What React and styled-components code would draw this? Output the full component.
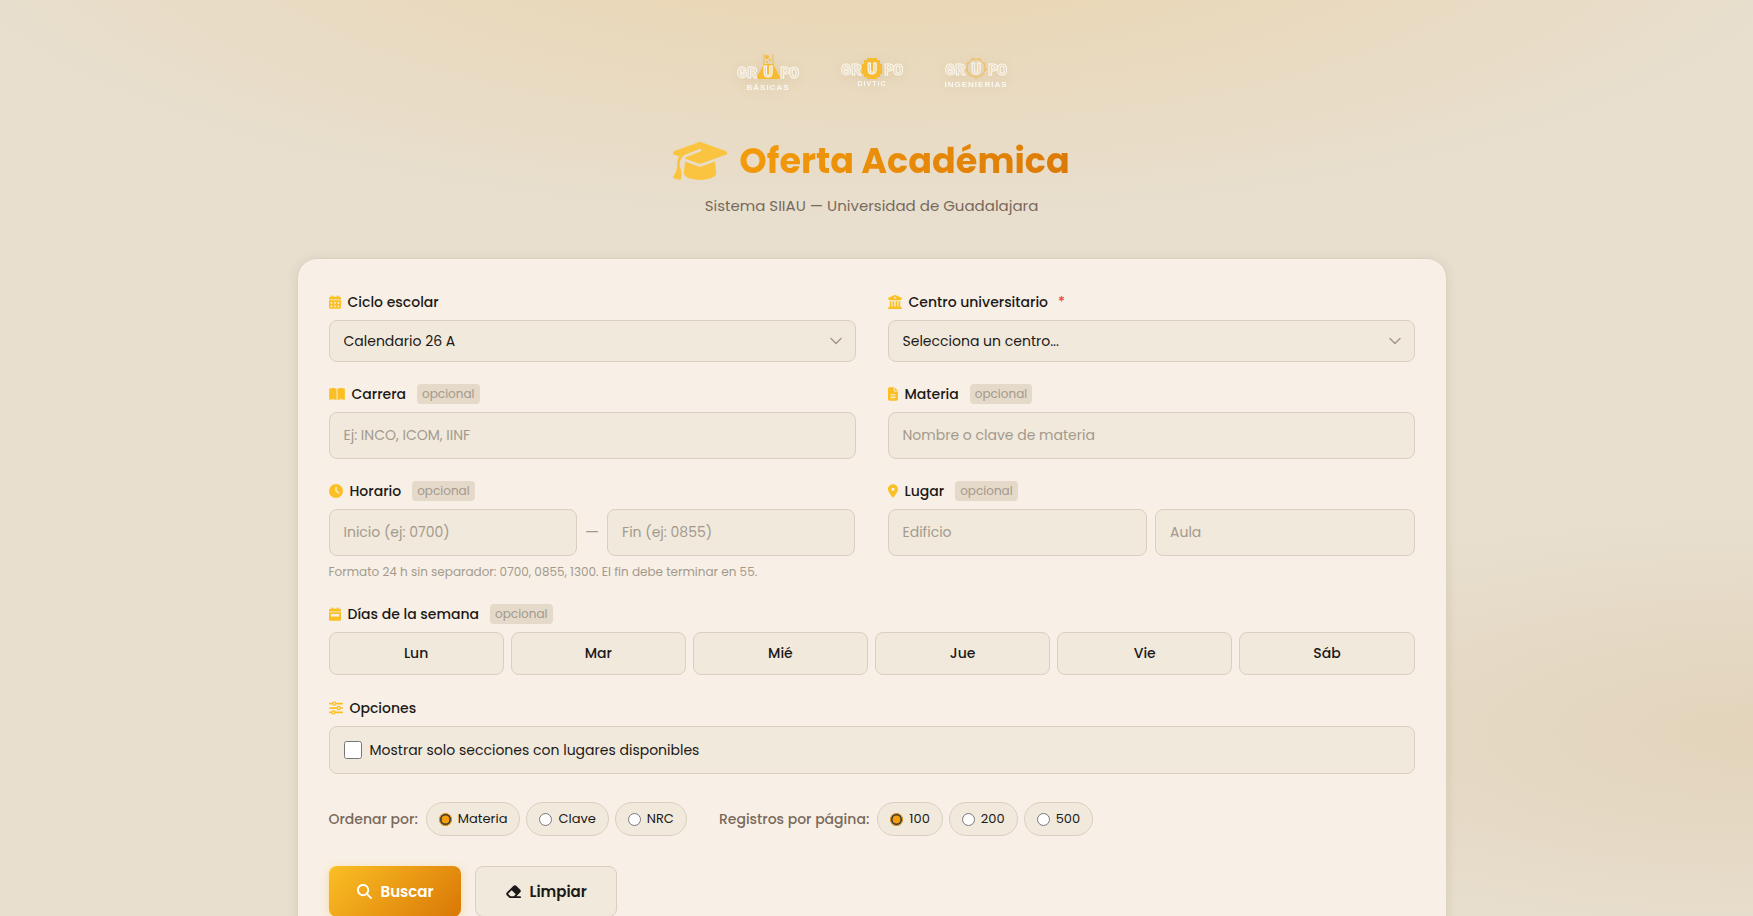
import React, { useState } from "react";
import styled, { createGlobalStyle, css } from "styled-components";
import {
  FaBookOpen,
  FaBuildingColumns,
  FaCalendarDays,
  FaCalendarWeek,
  FaClock,
  FaEraser,
  FaFileLines,
  FaGraduationCap,
  FaLocationDot,
  FaMagnifyingGlass,
  FaSliders,
} from "react-icons/fa6";

const DAYS = ["Lun", "Mar", "Mié", "Jue", "Vie", "Sáb"];
const ORDERS = ["Materia", "Clave", "NRC"];
const PAGE_SIZES = ["100", "200", "500"];

const Wordmark = ({ caption, baseline = 27, captionY = 39, small, children }) => (
  <Logo viewBox="0 0 64 48" role="img" aria-label={`Grupo ${caption}`}>
    <LogoLetter x="6" y={baseline}>G</LogoLetter>
    <LogoLetter x="16" y={baseline}>R</LogoLetter>
    {children}
    <LogoLetter x="32" y={baseline - 1}>U</LogoLetter>
    <LogoLetter x="49" y={baseline}>P</LogoLetter>
    <LogoLetter x="58" y={baseline}>O</LogoLetter>
    <LogoCaption x="32" y={captionY} $small={small}>
      {caption}
    </LogoCaption>
  </Logo>
);

const App = () => {
  const [days, setDays] = useState([]);
  const [order, setOrder] = useState("Materia");
  const [pageSize, setPageSize] = useState("100");

  const toggleDay = (day) =>
    setDays(days.includes(day) ? days.filter((d) => d !== day) : [...days, day]);

  return (
    <>
      <GlobalStyle />
      <Page>
        <Header>
          <Logos>
            <Wordmark caption="BÁSICAS" baseline={30} captionY={42}>
              <path d="M28 6v11M37 6v11" stroke="#f3b536" />
              <path d="M28 16h9l7 13q0 2-1 2H22q-1 0-1-2z" fill="#fbb40f" />
              <circle cx="31" cy="9" r="2" fill="#fbb40f" />
              <circle cx="34" cy="12" r="1" fill="#fbb40f" />
              <circle cx="31" cy="14" r="1" fill="#fbb40f" />
            </Wordmark>
            <Wordmark caption="DIVTIC" captionY={38} small>
              <path d="M27 10h10v2h3v4h2v10h-2v3h-3v2H27v-2h-3v-3h-2V16h2v-4h3z" fill="#fbb40f" />
            </Wordmark>
            <Wordmark caption="INGENIERIAS">
              <circle cx="32" cy="20" r="9" fill="none" stroke="#f2b640" />
              <circle cx="32" cy="20" r="10" fill="none" stroke="#f2b640" strokeDasharray="3 4" />
            </Wordmark>
          </Logos>
          <Title>
            <TitleIcon />
            <TitleText>Oferta Académica</TitleText>
          </Title>
          <Subtitle>Sistema SIIAU — Universidad de Guadalajara</Subtitle>
        </Header>

        <Card onSubmit={(e) => e.preventDefault()}>
          <Columns>
            <Field>
              <Label htmlFor="ciclo" $icon={12}>
                <FaCalendarDays />
                Ciclo escolar
              </Label>
              <SelectWrap>
                <Select id="ciclo">
                  <option>Calendario 26 A</option>
                </Select>
                <Chevron />
              </SelectWrap>
            </Field>
            <Field>
              <Label htmlFor="centro">
                <FaBuildingColumns />
                Centro universitario
                <Required>*</Required>
              </Label>
              <SelectWrap>
                <Select id="centro">
                  <option>Selecciona un centro...</option>
                </Select>
                <Chevron />
              </SelectWrap>
            </Field>

            <Field>
              <Label htmlFor="carrera" $icon={16}>
                <FaBookOpen />
                Carrera
                <Badge>opcional</Badge>
              </Label>
              <Input id="carrera" placeholder="Ej: INCO, ICOM, IINF" />
            </Field>
            <Field>
              <Label htmlFor="materia" $icon={10}>
                <FaFileLines />
                Materia
                <Badge>opcional</Badge>
              </Label>
              <Input id="materia" placeholder="Nombre o clave de materia" />
            </Field>

            <Field>
              <Label htmlFor="inicio">
                <FaClock />
                Horario
                <Badge>opcional</Badge>
              </Label>
              <Inline>
                <Input id="inicio" placeholder="Inicio (ej: 0700)" />
                <Dash>—</Dash>
                <Input aria-label="Fin" placeholder="Fin (ej: 0855)" />
              </Inline>
              <Hint>Formato 24 h sin separador: 0700, 0855, 1300. El fin debe terminar en 55.</Hint>
            </Field>
            <Field>
              <Label htmlFor="edificio" $icon={10}>
                <FaLocationDot />
                Lugar
                <Badge>opcional</Badge>
              </Label>
              <Inline>
                <Input id="edificio" placeholder="Edificio" />
                <Input aria-label="Aula" placeholder="Aula" />
              </Inline>
            </Field>
          </Columns>

          <Field role="group" aria-labelledby="dias">
            <Label as="div" id="dias" $icon={12}>
              <FaCalendarWeek />
              Días de la semana
              <Badge>opcional</Badge>
            </Label>
            <Days>
              {DAYS.map((day) => (
                <Day
                  key={day}
                  type="button"
                  aria-pressed={days.includes(day)}
                  $active={days.includes(day)}
                  onClick={() => toggleDay(day)}
                >
                  {day}
                </Day>
              ))}
            </Days>
          </Field>

          <Field role="group" aria-labelledby="opciones">
            <Label as="div" id="opciones">
              <FaSliders />
              Opciones
            </Label>
            <CheckRow>
              <Checkbox type="checkbox" />
              Mostrar solo secciones con lugares disponibles
            </CheckRow>
          </Field>

          <Filters>
            <Group role="radiogroup" aria-labelledby="ordenar">
              <GroupName id="ordenar">Ordenar por:</GroupName>
              <Pills>
                {ORDERS.map((item) => (
                  <Pill key={item}>
                    <Radio
                      type="radio"
                      name="orden"
                      checked={order === item}
                      onChange={() => setOrder(item)}
                    />
                    {item}
                  </Pill>
                ))}
              </Pills>
            </Group>
            <Group role="radiogroup" aria-labelledby="registros">
              <GroupName id="registros">Registros por página:</GroupName>
              <Pills>
                {PAGE_SIZES.map((item) => (
                  <Pill key={item}>
                    <Radio
                      type="radio"
                      name="registros"
                      checked={pageSize === item}
                      onChange={() => setPageSize(item)}
                    />
                    {item}
                  </Pill>
                ))}
              </Pills>
            </Group>
          </Filters>

          <Actions>
            <Button type="submit" $primary>
              <FaMagnifyingGlass />
              Buscar
            </Button>
            <Button type="reset">
              <FaEraser />
              Limpiar
            </Button>
          </Actions>
        </Card>
      </Page>
    </>
  );
};

const Chevron = () => (
  <ChevronIcon viewBox="0 0 12 8" aria-hidden="true">
    <path
      d="M1 1.5l5 5 5-5"
      fill="none"
      stroke="currentColor"
      strokeWidth="1.5"
      strokeLinecap="round"
      strokeLinejoin="round"
    />
  </ChevronIcon>
);

const GlobalStyle = createGlobalStyle`
  * {
    box-sizing: border-box;
  }
  body {
    margin: 0;
    padding-right: 10px;
    min-height: 100vh;
    color: #1c1917;
    font-family: Poppins, Inter, sans-serif;
    font-size: 14px;
    background:
      radial-gradient(ellipse 80% 50% at 50% -10%, rgba(245, 158, 11, 0.18), transparent 70%),
      radial-gradient(ellipse 60% 40% at 100% 80%, rgba(190, 130, 40, 0.12), transparent 60%),
      #e8dfcf;
    background-attachment: fixed;
  }
  input, select, button {
    font-family: inherit;
    color: inherit;
  }
`;

const surface = css`
  border: 1px solid #d9d0bf;
  border-radius: 8px;
  background: #f1e9dc;
`;

const Page = styled.main`
  max-width: 1198px;
  margin: 0 auto;
  padding: 48px 24px;
`;

const Header = styled.header`
  display: flex;
  flex-direction: column;
  align-items: center;
  margin-bottom: 39px;
`;

const Logos = styled.div`
  display: flex;
  gap: 40px;
  margin-bottom: 37px;
`;

const Logo = styled.svg`
  width: 64px;
  height: 48px;
  overflow: visible;
  opacity: 0.8;
  filter: drop-shadow(0 2px 6px rgba(160, 120, 50, 0.2));
`;

const LogoLetter = styled.text`
  font-family: "Liberation Mono", monospace;
  font-size: 17px;
  font-weight: 700;
  text-anchor: middle;
  fill: #e8d5b0;
  stroke: #fff;
  stroke-width: 1px;
`;

const LogoCaption = styled.text`
  font-family: "Liberation Sans", sans-serif;
  font-size: ${({ $small }) => ($small ? "7px" : "8px")};
  font-weight: 700;
  letter-spacing: 1px;
  text-anchor: middle;
  fill: #fff;
`;

const Title = styled.h1`
  display: flex;
  align-items: center;
  gap: 12px;
  margin: 0;
  font-size: 35px;
  line-height: 56px;
  font-weight: 700;
`;

const TitleIcon = styled(FaGraduationCap)`
  width: 54px;
  height: 44px;
  color: #fbc440;
`;

const TitleText = styled.span`
  background: linear-gradient(135deg, #f59e0b, #d97706);
  background-clip: text;
  color: transparent;
`;

const Subtitle = styled.p`
  margin: 4px 0 0;
  color: #78695c;
  font-size: 15px;
  line-height: 26px;
`;

const Card = styled.form`
  display: flex;
  flex-direction: column;
  gap: 22px;
  padding: 32px 31px;
  border: 1px solid #ddd2bf;
  border-radius: 20px;
  background: #f8f0e6;
  box-shadow: 0 2px 12px rgba(90, 70, 30, 0.12);
`;

const Columns = styled.div`
  display: grid;
  grid-template-columns: 1fr 1fr;
  gap: 21px 32px;
  @media (max-width: 768px) {
    grid-template-columns: 1fr;
  }
`;

const Field = styled.div`
  display: flex;
  flex-direction: column;
  gap: 7px;
  min-width: 0;
`;

const Label = styled.label`
  display: flex;
  align-items: center;
  gap: 7px;
  font-size: 14px;
  line-height: 22px;
  font-weight: 500;
  svg {
    width: ${({ $icon = 14 }) => $icon}px;
    height: 14px;
    color: #fbbf24;
  }
`;

const Required = styled.span`
  margin-left: 3px;
  color: #ef4444;
`;

const Badge = styled.span`
  margin-left: 4px;
  padding: 0 5px;
  border-radius: 4px;
  background: #e5d9c9;
  color: #a39a8d;
  font-size: 12px;
  line-height: 20px;
  font-weight: 400;
`;

const Input = styled.input`
  ${surface}
  width: 100%;
  min-width: 0;
  height: 47px;
  padding: 0 14px;
  font-size: 14px;
  &::placeholder {
    color: #a39a8d;
  }
`;

const SelectWrap = styled.div`
  position: relative;
`;

const Select = styled.select`
  ${surface}
  display: block;
  appearance: none;
  width: 100%;
  height: 42px;
  padding: 0 40px 0 14px;
  font-size: 14px;
`;

const ChevronIcon = styled.svg`
  position: absolute;
  top: 50%;
  right: 14px;
  width: 12px;
  height: 8px;
  margin-top: -4px;
  color: #a39a8d;
  pointer-events: none;
`;

const Inline = styled.div`
  display: flex;
  align-items: center;
  gap: 8px;
`;

const Dash = styled.span`
  color: #a39a8d;
  font-size: 16px;
  line-height: 22px;
`;

const Hint = styled.p`
  margin: 0;
  color: #a39a8d;
  font-size: 12px;
  line-height: 18px;
`;

const Days = styled.div`
  display: grid;
  grid-template-columns: repeat(6, 1fr);
  gap: 7px;
`;

const Day = styled.button`
  ${surface}
  height: 43px;
  font-size: 14px;
  font-weight: 500;
  cursor: pointer;
  ${({ $active }) => $active && css`
    border-color: #f59e0b;
    background: #fbe3ae;
  `}
`;

const CheckRow = styled.label`
  ${surface}
  display: flex;
  align-items: center;
  gap: 8px;
  height: 48px;
  padding: 0 14px;
`;

const Checkbox = styled.input`
  width: 18px;
  height: 18px;
  margin: 0;
  accent-color: #f59e0b;
`;

const Filters = styled.div`
  display: flex;
  flex-wrap: wrap;
  gap: 16px 32px;
  padding: 6px 0 8px;
`;

const Group = styled.div`
  display: flex;
  align-items: center;
  gap: 8px;
`;

const GroupName = styled.span`
  color: #78695c;
  font-size: 14px;
  font-weight: 500;
`;

const Pills = styled.div`
  display: flex;
  gap: 6px;
`;

const Pill = styled.label`
  ${surface}
  display: flex;
  align-items: center;
  gap: 6px;
  height: 34px;
  padding: 0 12px;
  border-radius: 17px;
  font-size: 13px;
`;

const Radio = styled.input`
  width: 13px;
  height: 13px;
  margin: 0;
  accent-color: #f59e0b;
`;

const Actions = styled.div`
  display: flex;
  gap: 14px;
`;

const Button = styled.button`
  ${surface}
  display: flex;
  align-items: center;
  gap: 8px;
  height: 51px;
  padding: 0 29px;
  font-size: 15px;
  font-weight: 600;
  cursor: pointer;
  svg {
    width: 17px;
    height: 15px;
  }
  ${({ $primary }) => $primary && css`
    padding: 0 27px;
    border: 0;
    background: linear-gradient(135deg, #fbbf24, #d97706);
    color: #fff;
    box-shadow: 0 2px 10px rgba(245, 158, 11, 0.3);
  `}
`;

export default App;
